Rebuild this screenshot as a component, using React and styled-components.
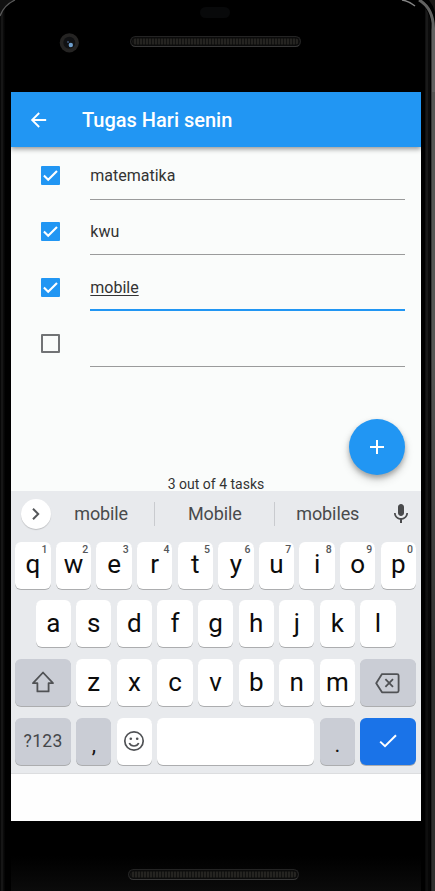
import React from "react";
import styled, { createGlobalStyle, css } from "styled-components";

const Global = createGlobalStyle`
  * { box-sizing: border-box; }
  body { margin: 0; background: #000; font-family: Roboto, sans-serif; overflow: hidden; }
`;

const Phone = styled.div`
  position: relative;
  width: 435px;
  height: 891px;
  display: grid;
  grid-template: 92px 729px 70px / 11px 410px 14px;
  background: #000;
  overflow: hidden;
`;
const LeftEdge = styled.div`
  grid-area: 1 / 1 / 4 / 2;
  background: linear-gradient(90deg, #080808 0 1px, #161616 1px 3px, #0b0b0b 3px 4px, #000 5px);
`;
const RightEdge = styled.div`
  grid-area: 1 / 3 / 4 / 4;
  background:
    linear-gradient(180deg, transparent 0 40%, rgba(0, 0, 0, 0.45) 75%),
    linear-gradient(90deg, #000 0 4px, #101010 4px 5px, #191919 5px 7px, #0c0c0c 7px 9px, #000 9px 10px, #383838 10px 11px, #565654 11px 14px);
`;
const Corners = styled.svg`
  position: absolute;
  inset: 0 auto auto 0;
`;
const TopBezel = styled.div`
  grid-area: 1 / 2;
  display: grid;
  grid-template: 7px 11px 18px 11px 1fr / 48px 71px 171px 1fr;
`;
const Sensor = styled.div`
  grid-area: 2 / 3;
  justify-self: center;
  width: 30px;
  margin-right: 2px;
  border-radius: 6px;
  background: #08090a;
`;
const Camera = styled.svg`
  grid-area: 3 / 1 / 5 / 3;
  margin-left: 48px;
  margin-top: 15px;
`;
const Grill = styled.div`
  grid-area: ${(p) => (p.$bottom ? "auto" : "4 / 3")};
  width: 171px;
  height: 11px;
  border: 1px solid #242424;
  border-bottom-color: #383838;
  border-radius: 6px;
  background: repeating-linear-gradient(90deg, #252421 0 2px, #121211 2px 3px);
  box-shadow: inset 0 0 0 1.5px #0c0c0c;
`;
const BottomBezel = styled.div`
  grid-area: 3 / 2;
  padding: 48px 0 0 117px;
  background: linear-gradient(#000 50%, #0b0b0b);
`;

const Screen = styled.div`
  grid-area: 2 / 2;
  display: flex;
  flex-direction: column;
  background: #fafcfb;
  overflow: hidden;
`;
const AppBar = styled.header`
  flex: none;
  height: 55px;
  display: flex;
  align-items: center;
  padding: 1px 0 0 16px;
  gap: 32px;
  background: #2196f3;
  color: #fff;
  box-shadow: 0 2px 5px rgba(0, 0, 0, 0.42);
  z-index: 1;
`;
const Title = styled.h1`
  margin: 0;
  font-size: 20px;
  line-height: 24px;
  font-weight: 500;
  letter-spacing: 0;
`;
const Body = styled.main`
  position: relative;
  height: 343.5px;
  flex: none;
  display: flex;
  flex-direction: column;
`;
const Task = styled.label`
  height: 55.9px;
  flex: none;
  padding: 0 16.5px 0 30px;
  display: grid;
  grid-template-columns: 19px 1fr;
  column-gap: 30.3px;
`;
const Box = styled.span`
  width: 19px;
  height: 19px;
  margin-top: 18.9px;
  border: ${(p) => (p.$on ? "0" : "2px solid #717375")};
  border-radius: 1px;
  background: ${(p) => (p.$on ? "#2196f3" : "transparent")};
  svg { display: block; }
`;
const Field = styled.span`
  height: 52.6px;
  padding-top: 18.9px;
  border-bottom: ${(p) => (p.$focus ? "2px solid #2196f3" : "1px solid #9a9b9b")};
  color: #333;
  font-size: 16px;
  line-height: 20px;
  letter-spacing: 0;
`;
const Composing = styled.span`
  text-decoration: underline;
  text-decoration-thickness: 1px;
  text-underline-offset: 2px;
`;
const Fab = styled.button`
  position: absolute;
  right: 16px;
  bottom: 15.3px;
  width: 56px;
  height: 56px;
  padding: 0;
  border: 0;
  border-radius: 50%;
  background: #2196f3;
  display: grid;
  place-items: center;
  box-shadow: 0 3px 5px rgba(0, 0, 0, 0.25), 0 5px 10px rgba(0, 0, 0, 0.16);
`;
const Count = styled.p`
  margin: auto 0 -1px;
  text-align: center;
  color: #333;
  font-size: 14px;
  line-height: 16px;
`;

const Keyboard = styled.section`
  position: relative;
  z-index: 1;
  height: 283px;
  flex: none;
  background: #e8eaed;
  border-bottom: 1px solid #dcdddf;
  padding: 0 5.1px 0 4.3px;
  display: flex;
  flex-direction: column;
`;
const Suggestions = styled.div`
  height: 51px;
  display: grid;
  grid-template-columns: 26.7px 106.3px 1px 119px 1px 105px 1fr;
  align-items: center;
  padding: 0 3px 5px 6px;
  > svg { justify-self: end; }
`;
const More = styled.span`
  width: 30px;
  height: 30px;
  border-radius: 50%;
  background: #fff;
  display: grid;
  place-items: center;
  box-shadow: 0 1px 1px rgba(0, 0, 0, 0.18);
`;
const Word = styled.span`
  text-align: center;
  color: #494a4c;
  font-size: 18px;
  letter-spacing: -0.1px;
`;
const Divider = styled.span`
  height: 24px;
  background: #c9cbcf;
`;
const Keys = styled.div`
  display: grid;
  grid-template-columns: repeat(20, minmax(0, 1fr));
  grid-auto-rows: 47px;
  column-gap: 5.3px;
  row-gap: 11.9px;
`;
const tones = {
  light: css`background: #fff; color: #0c0c0c;`,
  grey: css`background: #cacdd5; color: #45474a;`,
  blue: css`background: #1a73e8; color: #fff;`,
};
const Key = styled.span`
  position: relative;
  grid-column: ${(p) => p.$start || "auto"} / span ${(p) => p.$span || 2};
  ${(p) => tones[p.$tone || "light"]}
  border-radius: 6px;
  box-shadow: 0 1px 0.5px rgba(0, 0, 0, 0.26);
  display: flex;
  justify-content: center;
  align-items: center;
  font-size: ${(p) => p.$size || 26}px;
  line-height: 30px;
  padding-bottom: 2px;
  letter-spacing: ${(p) => p.$track || 0}px;
`;
const Punct = styled.span`
  padding-top: 8px;
  color: #151515;
  font-size: 22px;
`;
const Hint = styled.sup`
  position: absolute;
  top: 2px;
  right: 3px;
  color: #55575a;
  font-size: 10.5px;
  line-height: 12px;
  font-weight: 500;
`;
const NavBar = styled.div`
  flex: 1;
  background: #fefefe;
`;

const Check = () => (
  <svg width="19" height="19" viewBox="0 0 19 19" fill="none" stroke="#fff" strokeWidth="2.1">
    <path d="M2.9 9.6 7.2 13.8 16 5" />
  </svg>
);

const tasks = [
  { text: "matematika", done: true },
  { text: "kwu", done: true },
  { text: "mobile", done: true, focus: true },
  { text: "", done: false },
];

export default function App() {
  return (
    <Phone>
      <Global />
      <LeftEdge />
      <RightEdge />
      <TopBezel>
        <Sensor />
        <Camera width="20" height="20" viewBox="0 0 20 20">
          <circle cx="10.3" cy="9.8" r="9.6" fill="#252423" />
          <circle cx="10.3" cy="9.8" r="6" fill="#101113" />
          <circle cx="11.8" cy="12" r="2.2" fill="#6f9fcd" />
          <circle cx="9" cy="9" r="1" fill="#3b5275" />
        </Camera>
        <Grill />
      </TopBezel>
      <Screen>
        <AppBar>
          <svg width="23" height="24" viewBox="0 0 24 24" fill="#fff">
            <path d="M20 11H7.83l5.59-5.59L12 4l-8 8 8 8 1.41-1.41L7.83 13H20v-2z" />
          </svg>
          <Title>Tugas Hari senin</Title>
        </AppBar>
        <Body>
          {tasks.map((t, i) => (
            <Task key={i}>
              <Box $on={t.done}>{t.done && <Check />}</Box>
              <Field $focus={t.focus}>{t.focus ? <Composing>{t.text}</Composing> : t.text}</Field>
            </Task>
          ))}
          <Count>3 out of 4 tasks</Count>
          <Fab aria-label="Tambah">
            <svg width="24" height="24" viewBox="0 0 24 24" fill="#fff">
              <path d="M19 13h-6v6h-2v-6H5v-2h6V5h2v6h6v2z" />
            </svg>
          </Fab>
        </Body>
        <Keyboard>
          <Suggestions>
            <More>
              <svg width="24" height="24" viewBox="0 0 24 24" fill="none" stroke="#55575a" strokeWidth="2">
                <path d="M9 6.8 14.2 12 9 17.2" />
              </svg>
            </More>
            <Word>mobile</Word>
            <Divider />
            <Word>Mobile</Word>
            <Divider />
            <Word>mobiles</Word>
            <svg width="24" height="24" viewBox="0 0 24 24" fill="#494a4c">
              <path d="M12 14c1.66 0 3-1.34 3-3V5c0-1.66-1.34-3-3-3S9 3.34 9 5v6c0 1.66 1.34 3 3 3zm5.3-3c0 3-2.54 5.1-5.3 5.1S6.7 14 6.7 11H5c0 3.41 2.72 6.23 6 6.72V21h2v-3.28c3.28-.48 6-3.3 6-6.72h-1.7z" />
            </svg>
          </Suggestions>
          <Keys>
            {[..."qwertyuiop"].map((c, i) => (
              <Key key={c}>
                {c}
                <Hint>{(i + 1) % 10}</Hint>
              </Key>
            ))}
            {[..."asdfghjkl"].map((c, i) => (
              <Key key={c} $start={i ? undefined : 2}>{c}</Key>
            ))}
            <Key $tone="grey" $span={3} $start={1}>
              <svg width="26" height="26" viewBox="0 0 26 26" fill="none" stroke="#505255" strokeWidth="1.8" strokeLinejoin="round">
                <path d="M13 3.5 23 14.2h-4.4v8.2H7.4v-8.2H3z" />
              </svg>
            </Key>
            {[..."zxcvbnm"].map((c) => (
              <Key key={c}>{c}</Key>
            ))}
            <Key $tone="grey" $span={3}>
              <svg width="28" height="26" viewBox="0 0 28 26" fill="none" stroke="#505255" strokeWidth="1.8" strokeLinejoin="round">
                <path d="M8 5.1h15.1q1.5 0 1.5 1.5v15.2q0 1.5-1.5 1.5H8L2.2 14.2z" />
                <path d="m11.4 10.2 7.6 7.6m0-7.6-7.6 7.6" />
              </svg>
            </Key>
            <Key $tone="grey" $span={3} $size={17.5} $track={0.3}>?123</Key>
            <Key $tone="grey"><Punct>,</Punct></Key>
            <Key>
              <svg width="22" height="22" viewBox="0 0 22 22" fill="none" stroke="#505255" strokeWidth="1.7">
                <circle cx="11" cy="11" r="9.2" />
                <path d="M6.3 13q1.3 3 4.7 3t4.7-3" />
                <circle cx="7.8" cy="8.8" r="1.3" fill="#505255" stroke="none" />
                <circle cx="14.2" cy="8.8" r="1.3" fill="#505255" stroke="none" />
              </svg>
            </Key>
            <Key $span={8} aria-label="Spasi" />
            <Key $tone="grey"><Punct>.</Punct></Key>
            <Key $tone="blue" $span={3}>
              <svg width="24" height="24" viewBox="0 0 24 24" fill="none" stroke="#fff" strokeWidth="2">
                <path d="M4.2 12.6 9 17.2 20 6.2" />
              </svg>
            </Key>
          </Keys>
        </Keyboard>
        <NavBar />
      </Screen>
      <BottomBezel>
        <Grill $bottom />
      </BottomBezel>
      <Corners width="435" height="92" viewBox="0 0 435 92" fill="none">
        <path d="M0 14Q5 4 14 0H0z" fill="#111" />
        <path d="M0 16Q4 5 15 0" stroke="#5a5a5a" strokeWidth="1.2" />
        <path d="M401 0H435V60H432V30Q430 8 417 0z" fill="#000" />
        <path d="M402 0Q409 1 415 6" stroke="#858585" strokeWidth="1.4" />
        <path d="M419 0Q433 8 433.5 28V92" stroke="#626261" strokeWidth="3" />
        <path d="M430 0H435V12Q433 5 429 0z" fill="#1b1917" />
      </Corners>
    </Phone>
  );
}
